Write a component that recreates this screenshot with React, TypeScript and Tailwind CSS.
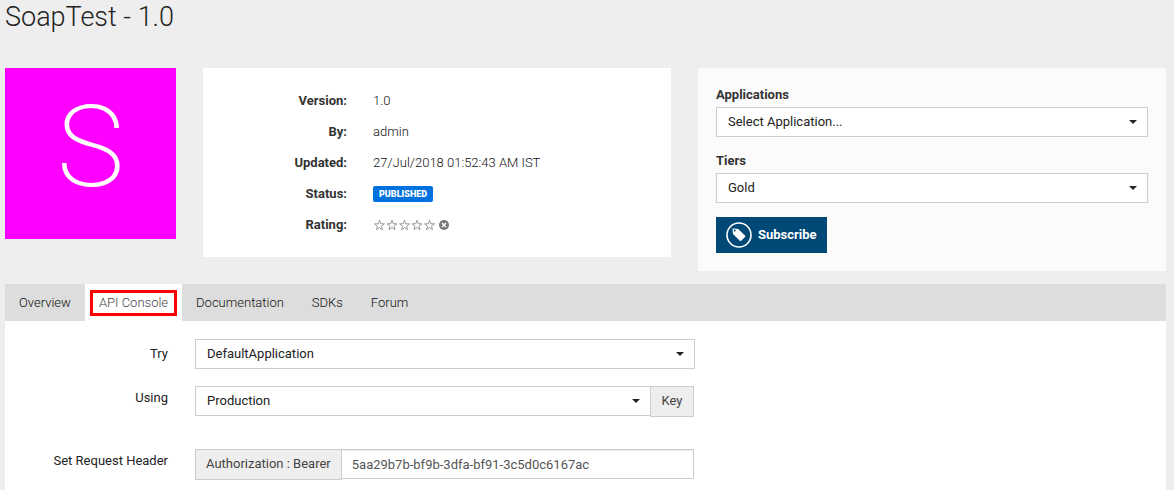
import type { ReactNode } from "react";

function Select({ id, options, className = "" }: { id: string; options: string[]; className?: string }) {
  return (
    <div className={`relative ${className}`}>
      <select
        id={id}
        className="block h-[30px] w-full appearance-none border border-[#ccc] bg-white pr-8 pl-[11px] text-[13px] text-[#222]"
      >
        {options.map((o) => (
          <option key={o}>{o}</option>
        ))}
      </select>
      <svg viewBox="0 0 8 4" className="pointer-events-none absolute top-[13px] right-[11px] h-1 w-2" aria-hidden="true">
        <path d="M0 0h8L4 4z" fill="#222" />
      </svg>
    </div>
  );
}

function Detail({ label, children }: { label: string; children: ReactNode }) {
  return (
    <div className="flex h-[31px] items-center">
      <dt className="w-[144px] shrink-0 text-right font-bold text-[#333]">{label}</dt>
      <dd className="ml-[26px] flex items-center font-light text-[#111]">{children}</dd>
    </div>
  );
}

function Stars() {
  return (
    <svg viewBox="0 0 125 24" className="h-3 w-[63px]" role="img" aria-label="Not rated">
      {[0, 25, 50, 75, 100].map((x) => (
        <path
          key={x}
          transform={`translate(${x} 0)`}
          d="M12.500 2.500l2.500 7 7.500.2-6 4.500 2.100 7.100-6.100-4.200-6.100 4.200 2.100-7.100-6-4.500 7.500-.2z"
          fill="none"
          stroke="#999"
          strokeWidth="2"
        />
      ))}
    </svg>
  );
}

function Tab({ children }: { children: ReactNode }) {
  return (
    <a href="#" className="flex items-center px-[14px]">
      {children}
    </a>
  );
}

export default function App() {
  return (
    <div className="min-h-screen bg-[#eee] pr-2 pl-[5px] font-['Roboto',sans-serif] text-[13px] leading-5 text-[#222]">
      <h1 className="h-[68px] text-[27px] leading-[34px] font-light text-[#222]">SoapTest - 1.0</h1>

      <div className="grid grid-cols-[171px_1fr_1fr] items-start gap-[27px]">
        <div className="flex h-[171px] items-center justify-center bg-[#f0f] pb-[14px] text-[114px] leading-none font-extralight text-white">
          S
        </div>

        <dl className="bg-white pt-[17px] pb-[17px]">
          <Detail label="Version:">1.0</Detail>
          <Detail label="By:">admin</Detail>
          <Detail label="Updated:">27/Jul/2018 01:52:43 AM IST</Detail>
          <Detail label="Status:">
            <span className="rounded-[2px] bg-[#0072e0] px-[6px] text-[9px] leading-4 font-black text-white">PUBLISHED</span>
          </Detail>
          <Detail label="Rating:">
            <Stars />
            <button type="button" aria-label="Clear rating" className="ml-[3px]">
              <svg viewBox="0 0 10 10" className="h-[10px] w-[10px]" aria-hidden="true">
                <circle cx="5" cy="5" r="5" fill="#777" />
                <path d="M3 3l4 4M7 3L3 7" stroke="#fff" strokeWidth="1.500" />
              </svg>
            </button>
          </Detail>
        </dl>

        <form className="bg-[#fbfbfb] px-[18px] pt-[17px] pb-[18px]">
          <label htmlFor="applications" className="block h-[22px] font-bold text-[#333]">
            Applications
          </label>
          <Select id="applications" options={["Select Application..."]} />
          <label htmlFor="tiers" className="mt-[14px] block h-[22px] font-bold text-[#333]">
            Tiers
          </label>
          <Select id="tiers" options={["Gold"]} />
          <button type="button" className="mt-[14px] flex h-9 items-center bg-[#004876] px-[10px] font-bold text-white">
            <svg viewBox="0 0 26 26" className="mr-[6px] h-[26px] w-[26px]" aria-hidden="true">
              <circle cx="13" cy="13" r="12" fill="none" stroke="#fff" strokeWidth="1.600" />
              <path d="M6.500 7.200q0-.8.8-.8l4.900.6L19 13.600q.7.7 0 1.400L15.200 18.700q-.7.7-1.400 0L7 12z" fill="#fff" />
              <circle cx="8.700" cy="8.500" r="1" fill="#004876" />
            </svg>
            Subscribe
          </button>
        </form>
      </div>

      <nav className="mt-[13px] flex h-[37px] bg-[#ddd] font-light text-[#111]">
        <Tab>Overview</Tab>
        <a href="#" className="flex items-center bg-white px-[5px] text-[#444]">
          <span className="flex h-[26px] items-center border-3 border-[#f00] px-[6px]">API Console</span>
        </a>
        <Tab>Documentation</Tab>
        <Tab>SDKs</Tab>
        <Tab>Forum</Tab>
      </nav>

      <main className="min-h-[169px] bg-white pt-[18px]">
        <div className="flex">
          <label htmlFor="try" className="mr-[27px] w-[163px] pt-[5px] text-right">
            Try
          </label>
          <Select id="try" options={["DefaultApplication"]} className="w-[500px]" />
        </div>
        <div className="mt-[17px] flex">
          <label htmlFor="using" className="mr-[27px] w-[163px] pt-[2px] text-right">
            Using
          </label>
          <Select id="using" options={["Production"]} className="w-[456px]" />
          <button type="button" className="-ml-px h-[31px] w-11 border border-[#ccc] bg-[#eee] pb-[2px] text-[#444]">
            Key
          </button>
        </div>
        <div className="mt-8 flex">
          <label htmlFor="token" className="mr-[27px] w-[163px] pt-[2px] text-right">
            Set Request Header
          </label>
          <div className="flex w-[499px]">
            <span className="h-[31px] shrink-0 border border-[#ccc] bg-[#eee] px-[10px] leading-[27px] text-[#444]">
              Authorization : Bearer
            </span>
            <input
              id="token"
              type="text"
              defaultValue="5aa29b7b-bf9b-3dfa-bf91-3c5d0c6167ac"
              className="-ml-px h-[30px] min-w-0 flex-1 border border-[#ccc] bg-white px-[10px] text-[#555] shadow-[inset_0_1px_1px_rgba(0,0,0,0.075)]"
            />
          </div>
        </div>
      </main>
    </div>
  );
}
